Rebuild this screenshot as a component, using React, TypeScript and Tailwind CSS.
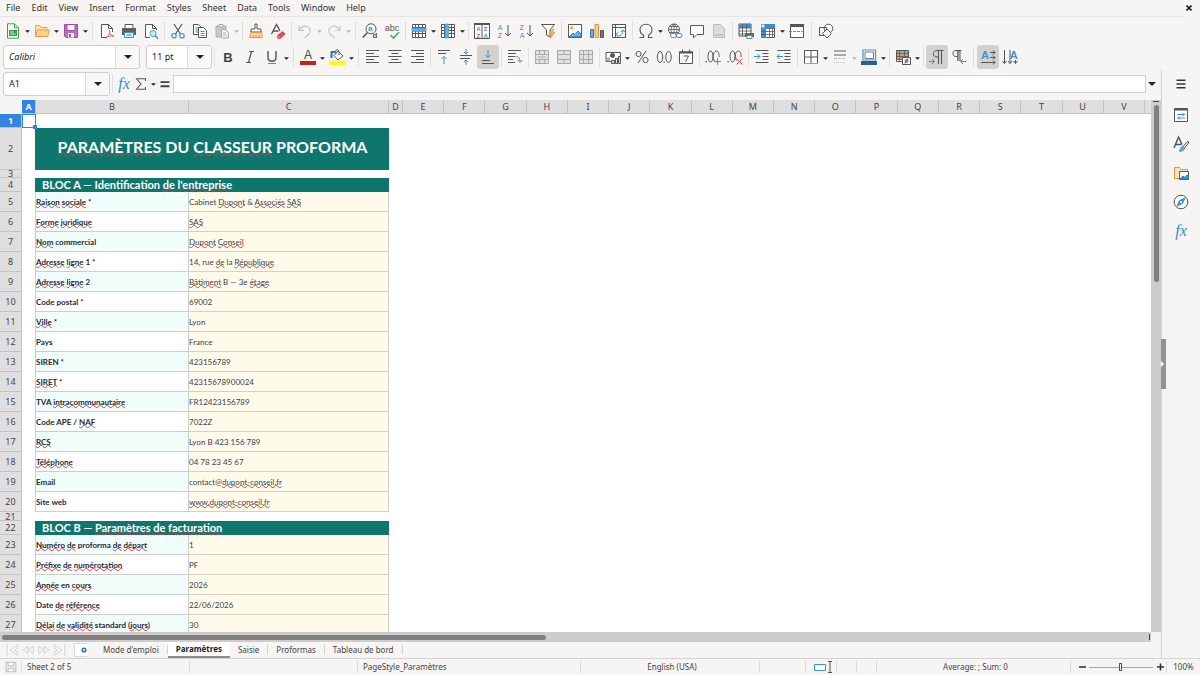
import type { ReactNode } from 'react';

const BLUE = '#3a93d6';
const GRAY = '#555555';

type IconProps = { children: ReactNode; size?: string };

function Svg({ children, size = 'size-4' }: IconProps) {
  return (
    <svg viewBox="0 0 16 16" className={`${size} shrink-0 overflow-visible`} fill="none" stroke={GRAY} strokeWidth="1" aria-hidden="true">
      {children}
    </svg>
  );
}

function Glyph({ x, y, size, color = GRAY, bold, children }: { x: number; y: number; size: number; color?: string; bold?: boolean; children: string }) {
  return (
    <text x={x} y={y} fontSize={size} fill={color} stroke="none" fontWeight={bold ? 700 : 400} textAnchor="middle" fontFamily="Liberation Sans, sans-serif">
      {children}
    </text>
  );
}

const tableLines = 'M1.5 4.5h13M1.5 7.5h13M1.5 10.5h13M4.5 1.5v13M7.5 1.5v13M11.5 1.5v13';

const icons: Record<string, ReactNode> = {
  New: (
    <>
      <path d="M2.500.8h7l4 4v10.400h-11z" fill="#fff" stroke="#3f9a55" />
      <path d="M9.500.8v4h4" stroke="#3f9a55" />
      <path d="M4 7h8v6H4z" fill="#2f9e4f" stroke="none" />
      <path d="M5 9h4M5 11h6" stroke="#c9ecd2" />
    </>
  ),
  Open: (
    <>
      <path d="M1.500 13.500v-11h4l1.500 2h6v3" fill="#fce0b0" stroke="#e8a04a" />
      <path d="M1.500 13.500l2-6.500h12l-2 6.500z" fill="#fbd08c" stroke="#e8a04a" />
    </>
  ),
  Save: (
    <>
      <path d="M1.500 1.500h13v13H3l-1.500-1.500z" fill="#b86fc6" stroke="#9a4fae" />
      <path d="M4 1.500h8v6H4z" fill="#fff" stroke="#9a4fae" />
      <path d="M5 10h6v4.500H5z" fill="#fff" stroke="none" />
      <path d="M6 11h2v3H6z" fill="#9a4fae" stroke="none" />
    </>
  ),
  'Export as PDF': (
    <>
      <path d="M8 14.500H2.500V1.500h7l4 4V9" fill="#fff" />
      <path d="M9.500 1.500v4h4" />
      <path d="M6.500 15c3-2 4.500-5 4.200-7.500-1 0-.5 5 4.300 5.500-3-.6-6 .3-8.500 2z" stroke="#e05c68" />
    </>
  ),
  Print: (
    <>
      <path d="M4 5V1.500h8V5" fill="#fff" />
      <path d="M1 5h14v7H1z" fill="#606060" stroke="none" />
      <path d="M3.500 9.500h9v5h-9z" fill="#dff0fb" stroke={BLUE} />
      <path d="M5.500 12h5" stroke={BLUE} />
    </>
  ),
  'Print Preview': (
    <>
      <path d="M7 14.500H2.500V1.500h7l4 4V7M9.500 1.500v4h4" fill="#fff" />
      <circle cx="10" cy="10.500" r="3" fill="#d8edfb" stroke={BLUE} />
      <path d="M12.200 12.700l3 3" stroke={BLUE} strokeWidth="1.400" />
    </>
  ),
  Cut: (
    <>
      <path d="M4 1l6.500 10M12 1L5.500 11" strokeWidth="1.200" />
      <circle cx="4" cy="12.700" r="2.200" stroke={BLUE} strokeWidth="1.200" />
      <circle cx="12" cy="12.700" r="2.200" stroke={BLUE} strokeWidth="1.200" />
    </>
  ),
  Copy: (
    <>
      <path d="M1.500 11.500v-10h5l3 3v7z" fill="#fff" />
      <path d="M3.500 5h3M3.500 7h4M3.500 9h4" stroke={BLUE} />
      <path d="M6.500 14.500v-10h5l3 3v7z" fill="#fff" />
      <path d="M8.500 8.500h4M8.500 10.500h4M8.500 12.500h4" stroke={BLUE} />
    </>
  ),
  Paste: (
    <>
      <path d="M2 3h10v11H2z" fill="#c8c8c8" stroke="#b0b0b0" />
      <path d="M5 1.500h4v2.500H5z" fill="#eee" stroke="#aaa" />
      <path d="M7.500 6.500h4l3 3v5.500h-7z" fill="#eee" stroke="#aaa" />
      <path d="M9 10h3M9 12h4" stroke="#bbb" />
    </>
  ),
  'Clone Formatting': (
    <>
      <path d="M7 1h2v5h4v3H3V6h4z" fill="#fff" />
      <path d="M3 9.500h10.500l.8 5H1.700z" fill="#fbd9a6" stroke="#e8943a" />
      <path d="M5 12v2.500M8 12v2.500M11 12v2.500" stroke="#e8943a" />
    </>
  ),
  'Clear Formatting': (
    <>
      <path d="M1.500 11L6.500 1.500 10 8M3.500 8h5" strokeWidth="1.300" />
      <path d="M7 13l5.500-4.500L15 11l-5 4.500H8z" fill="#e5484d" stroke="#e5484d" />
      <path d="M7 12.500l2.500 2.500" stroke="#fff" strokeWidth=".7" />
    </>
  ),
  Undo: <path d="M2 2.500v5h5M2.500 7C4 4.500 7 2.500 10 3.500c3.500 1.200 4 5 2 7.500l-4.500 4" stroke="#c0c0c0" strokeWidth="1.200" />,
  Redo: <path d="M14 2.500v5H9M13.500 7C12 4.500 9 2.500 6 3.500c-3.500 1.200-4 5-2 7.500l4.500 4" stroke="#c8c8c8" strokeWidth="1.200" />,
  'Find and Replace': (
    <>
      <circle cx="9" cy="5.800" r="5" fill="#fff" />
      <path d="M5.500 9.500L.8 14.500" strokeWidth="1.600" />
      <Glyph x={8.200} y={8} size={8} color={BLUE} bold>a</Glyph>
      <Glyph x={13} y={14.500} size={8} bold>d</Glyph>
    </>
  ),
  Spelling: (
    <>
      <Glyph x={8} y={8} size={9}>abc</Glyph>
      <path d="M6.500 12l3 3 5.500-6" stroke="#3cb371" strokeWidth="1.600" />
    </>
  ),
  Row: (
    <>
      <path d="M1.500 1.500h13v13h-13z" fill="#fff" />
      <path d={tableLines} />
      <path d="M1 5h14v3.500H1z" fill="#62b0ea" stroke={BLUE} strokeWidth=".6" />
    </>
  ),
  Column: (
    <>
      <path d="M1.500 1.500h13v13h-13z" fill="#fff" />
      <path d={tableLines} />
      <path d="M5 1h3.500v14H5z" fill="#62b0ea" stroke={BLUE} strokeWidth=".6" />
    </>
  ),
  Sort: (
    <>
      <path d="M.5 1.500h15v14H.5zM8 2v13" fill="#fff" />
      <path d="M0 1h16" strokeWidth="2" />
      <Glyph x={4.300} y={8} size={6} color={BLUE} bold>A</Glyph>
      <Glyph x={4.300} y={15} size={6} color="#a94bc0" bold>Z</Glyph>
      <Glyph x={11.700} y={8} size={6} color="#a94bc0" bold>Z</Glyph>
      <Glyph x={11.700} y={15} size={6} color={BLUE} bold>A</Glyph>
    </>
  ),
  'Sort Ascending': (
    <>
      <Glyph x={4} y={6.500} size={7} color={BLUE}>A</Glyph>
      <Glyph x={4} y={14.500} size={7} color="#a94bc0">Z</Glyph>
      <path d="M12 2v11M9 10l3 3 3-3" />
    </>
  ),
  'Sort Descending': (
    <>
      <Glyph x={4} y={6.500} size={7} color="#a94bc0">Z</Glyph>
      <Glyph x={4} y={14.500} size={7} color={BLUE}>A</Glyph>
      <path d="M12 2v11M9 10l3 3 3-3" />
    </>
  ),
  AutoFilter: (
    <>
      <path d="M1.500 1.500h13L10 7v7l-3.500-2V7z" fill="#fff" />
      <path d="M12.500 6L9 11h2.500l-1 4.500 4.500-6h-2.500L14 6z" fill="#f9b55c" stroke="#e8943a" strokeWidth=".6" />
    </>
  ),
  Image: (
    <>
      <path d="M1.500 1.500h13v13h-13z" fill="#fff" />
      <circle cx="4.800" cy="5" r="1.400" fill="#f7b25a" stroke="#e8943a" strokeWidth=".5" />
      <path d="M2 14l4-4 2 1.500L11 8l3 3v3z" fill="#62b0ea" stroke="#2b7fc0" />
    </>
  ),
  Chart: (
    <>
      <path d="M1.500 6.500h3v8h-3z" fill="#62b0ea" stroke="#2b7fc0" />
      <path d="M6 1.500h3.500v13H6z" fill="#fbd08c" stroke="#e8943a" />
      <path d="M11.500 7.500h3v7h-3z" fill="#777" />
    </>
  ),
  'Pivot Table': (
    <>
      <path d="M1.500 1.500h13v13h-13z" fill="#fff" />
      <path d="M1.500 4.500h13M4.500 1.500v13" />
      <path d="M5.500 11.500l1.500 1.500c3 0 5-2 5-5.500M5 11.200l2.500-2M5 11.200l2 2.500M12 7l-2 2M12 7l2 2" stroke={BLUE} />
    </>
  ),
  Symbol: <path d="M1.500 14.500h4v-2.300C3.300 11 2 9 2 6.800 2 3.500 4.600 1.200 8 1.200s6 2.300 6 5.600c0 2.200-1.300 4.200-3.500 5.400v2.300h4" strokeWidth="1.100" />,
  Hyperlink: (
    <>
      <circle cx="7" cy="6.500" r="5.500" fill="#fff" />
      <path d="M1.500 6.500h11M7 1v11M2.500 3.500h9M2.500 9.500h9M7 1C3 5 3 9 7 12M7 1c4 4 4 8 0 11" strokeWidth=".8" />
      <rect x="3.500" y="10.500" width="6" height="4" rx="2" fill="#fff" stroke={BLUE} />
      <rect x="9" y="10.500" width="6" height="4" rx="2" stroke={BLUE} />
    </>
  ),
  Comment: <path d="M1.500 2.500h13v9H8l-3.500 3.500v-3.500h-3z" fill="#fff" />,
  'Headers and Footers': (
    <>
      <path d="M2.500 1.500h7l4 4v9h-11z" fill="#ddd" stroke="#bbb" />
      <path d="M4 11h8v2H4z" fill="#c4c4c4" stroke="none" />
    </>
  ),
  'Print Area': (
    <>
      <path d="M1 1h12v12H1z" fill="#fff" />
      <path d="M1 1h12v4H1z" fill="#3a93d6" stroke="none" />
      <path d="M1 5h12M1 8h12M1 11h12M4.500 1v12M8.500 1v12" strokeWidth=".8" />
      <path d="M7 10h9v4H7z" fill="#666" stroke="none" />
      <path d="M9 12.500h5v3H9z" fill="#fff" stroke={BLUE} />
    </>
  ),
  Freeze: (
    <>
      <path d="M1.500 1.500h13v13h-13z" fill="#fff" />
      <path d="M1 1h5v14H1zM1 1h14v4H1z" fill="#2f8fd8" stroke="none" />
      <path d="M6 5.500h9M6 8.500h9M6 11.500h9M9.500 5v10M12.500 5v10M1 8.500h5M1 11.500h5" strokeWidth=".8" />
      <path d="M1 3h4M3 1v4" stroke="#fff" />
    </>
  ),
  Split: (
    <>
      <path d="M1.500 1.500h13v13h-13z" fill="#fff" />
      <path d="M1 2.500h14" strokeWidth="3" />
      <path d="M0 8.500h16" stroke={BLUE} strokeDasharray="3 1" />
    </>
  ),
  'Draw Functions': (
    <>
      <circle cx="10.500" cy="5.500" r="4.300" fill="#fff" />
      <path d="M1.500 4.500h7v8h-7z" />
      <path d="M9 6l4.500 4.500L9 15l-4.500-4.500z" fill="#f6f5f3" />
    </>
  ),
  Bold: <Glyph x={8} y={12.500} size={13} color="#444" bold>B</Glyph>,
  Italic: <path d="M7 2.500h5M4 13.500h5M9.500 2.500l-3 11" strokeWidth="1.200" />,
  Underline: (
    <>
      <path d="M4 2v6.500c0 5 8 5 8 0V2" strokeWidth="1.400" />
      <path d="M4 14.500h8" stroke={BLUE} />
    </>
  ),
  'Font Color': (
    <>
      <Glyph x={8} y={10} size={12} color="#444">A</Glyph>
      <path d="M0 12h16v4H0z" fill="#c9211e" stroke="none" />
    </>
  ),
  'Background Color': (
    <>
      <path d="M5 6.500L9 2l5 5-5 4z" fill="#fff" />
      <path d="M7 5c-2-6 4-6 3 1" />
      <path d="M2 3h4M2.500 2.500v6.500" stroke="#2474b8" strokeWidth="2" />
      <path d="M0 12h16v4H0z" fill="#ffff00" stroke="none" />
    </>
  ),
  'Align Left': <path d="M1 1.500h13M1 4.500h8M1 7.500h13M1 10.500h8M1 13.500h13" />,
  'Align Center': <path d="M1.500 1.500h13M4.500 4.500h7M1.500 7.500h13M4.500 10.500h7M1.500 13.500h13" />,
  'Align Right': <path d="M2 1.500h13M7 4.500h8M2 7.500h13M7 10.500h8M2 13.500h13" />,
  'Align Top': (
    <>
      <path d="M2 1.500h12M2 4.500h8" />
      <path d="M8 15V7.500M5.500 10L8 7.500l2.500 2.500" stroke={BLUE} />
    </>
  ),
  'Center Vertically': (
    <>
      <path d="M2 6.500h12M2 9.500h10" />
      <path d="M8 0v5M6 3l2 2 2-2M8 16v-5M6 13l2-2 2 2" stroke={BLUE} />
    </>
  ),
  'Align Bottom': (
    <>
      <path d="M2 11.500h8M2 14.500h12" />
      <path d="M8 1v7.500M5.500 6L8 8.500 10.500 6" stroke={BLUE} />
    </>
  ),
  'Wrap Text': (
    <>
      <path d="M1 1.500h13M1 4.500h8M1 7.500h7M1 10.500h5M1 13.500h7" />
      <path d="M8.500 7.500c3 0 4 1 4.500 5M10.500 11l2.500 2.500L15 11" stroke={BLUE} />
    </>
  ),
  'Merge and Center': <path d="M1.500 1.500h13v13h-13zM1.500 5.500h13M1.500 10.500h13M5.500 1.500v4M10.500 1.500v4M5.500 10.500v4M10.500 10.500v4M4 8h8" stroke="#aaa" fill="#e2e2e2" />,
  'Merge Cells': <path d="M1.500 1.500h13v13h-13zM1.500 5.500h13M1.500 10.500h13M8 1.500v4M8 10.500v4" stroke="#aaa" fill="#e2e2e2" />,
  'Unmerge Cells': <path d="M1.500 1.500h13v13h-13zM1.500 5.500h13M1.500 10.500h13M5.500 1.500v13M10.500 1.500v13" stroke="#aaa" fill="#e2e2e2" />,
  Currency: (
    <>
      <path d="M1 3.500h14.500v9H1z" fill="#fff" />
      <circle cx="7.500" cy="6.500" r="2" fill="#555" />
      <path d="M2 8.500h3v4H2z" stroke="none" fill="#aaa" />
      <path d="M6.500 11.500h3v3h-3zM10.500 9.500h2v5h-2zM13.500 7.500h2v7h-2z" fill="#ddd" />
    </>
  ),
  Percent: (
    <>
      <circle cx="4.500" cy="5" r="2.600" />
      <circle cx="11.500" cy="11" r="2.600" />
      <path d="M12 2L4 14" />
    </>
  ),
  Number: (
    <>
      <ellipse cx="4" cy="8" rx="2.700" ry="5.500" />
      <ellipse cx="12.500" cy="8" rx="2.700" ry="5.500" />
      <path d="M7.500 12.500h1.200v1.500H7.500z" fill={GRAY} stroke="none" />
    </>
  ),
  Date: (
    <>
      <path d="M1.500 3h13v11.500h-13z" fill="#fff" />
      <path d="M1 3.500h14" strokeWidth="2" />
      <path d="M4.500.5v3M11.500.5v3M5.500 7h5l-3 6" />
    </>
  ),
  'Add Decimal Place': (
    <>
      <path d="M.5 12h1.200v1.500H.5z" fill={GRAY} stroke="none" />
      <ellipse cx="5.500" cy="7.500" rx="2.500" ry="5.500" />
      <path d="M10.500 12.800c-3.500-1-3-10.800.8-10.800 2 0 3 2.500 2.800 6" />
      <path d="M9 12.500h7M12.500 9v7" stroke={BLUE} />
    </>
  ),
  'Delete Decimal Place': (
    <>
      <path d="M.5 12h1.200v1.500H.5z" fill={GRAY} stroke="none" />
      <ellipse cx="5.500" cy="7.500" rx="2.500" ry="5.500" />
      <path d="M9.500 11.500c-2-3-1.500-9.500 1.800-9.500 2 0 3 2.500 2.800 6" />
      <path d="M9.500 9.500l6 6M15.500 9.500l-6 6" stroke="#e5484d" />
    </>
  ),
  'Increase Indent': (
    <>
      <path d="M1.500 1.500h13M8.500 4.500h6M8.500 7.500h6M8.500 10.500h6M1.500 13.500h13" />
      <path d="M0 7.500h6M3.500 5L6 7.500 3.500 10" stroke={BLUE} />
    </>
  ),
  'Decrease Indent': (
    <>
      <path d="M1.500 1.500h13M8.500 4.500h6M8.500 7.500h6M8.500 10.500h6M1.500 13.500h13" />
      <path d="M7 7.500H1M3.500 5L1 7.500 3.500 10" stroke={BLUE} />
    </>
  ),
  Borders: (
    <>
      <path d="M1.500 1.500h13v13h-13zM1.500 8h13M8 1.500v13" fill="#fff" />
      <path d="M1 14.500h14" stroke="#e8943a" />
    </>
  ),
  'Border Style': (
    <>
      <path d="M2 2h12M2 6h12" stroke="#aaa" strokeWidth="2" />
      <path d="M2 9.500h12" stroke="#bbb" strokeDasharray="3 1" />
      <path d="M2 13.500h12" stroke="#bbb" strokeDasharray="1 1" />
    </>
  ),
  'Border Color': (
    <>
      <path d="M2 1h12.500v10H2z" fill="#fff" stroke={BLUE} strokeWidth="1.200" />
      <path d="M4 3h8.500v6.500H4z" fill="#fff" stroke="#777" />
      <path d="M0 12h16v4H0z" fill="#2a6099" stroke="none" />
    </>
  ),
  'Conditional Formatting': (
    <>
      <path d="M1.500 1.500h12v11h-12z" fill="#fff" />
      <path d="M2 2h11v2.500H2z" fill="#67c587" stroke="none" />
      <path d="M2 5h11v6H2z" fill="#f08c84" stroke="none" />
      <path d="M1.500 4.500h12M1.500 7.500h12M1.500 10.500h12M4.500 1.500v11M9.500 1.500v6" strokeWidth=".8" />
      <path d="M7.500 8.500h8v7h-8z" fill="#fff" />
      <path d="M9.500 11h4M9.500 13h4M13 9.500l-3 5" />
    </>
  ),
  'Left-To-Right': (
    <>
      <path d="M9.500 15V1.500M12.500 15V1.500M14.500 1.500H8C3 1.500 3 8 8 8h1.500" />
      <path d="M0 12.500h5.500M3 10l2.500 2.500L3 15" stroke={BLUE} />
    </>
  ),
  'Right-To-Left': (
    <>
      <path d="M6.500 12V1.500M9 12V1.500M10.500 1.500H5C1 1.500 1 7.500 5 7.500h1.500" />
      <path d="M6.500 2H9v10H6.500z" fill="#999" stroke="none" />
      <path d="M15.500 12.500H9.500M12 10l-2.500 2.500L12 15" stroke={BLUE} />
    </>
  ),
  'Text Direction Left to Right': (
    <>
      <Glyph x={5} y={10} size={11} color={BLUE} bold>A</Glyph>
      <path d="M10 3.500h5M13 1.500l2 2-2 2M10 8.500h5M13 6.500l2 2-2 2M1 13.500h14M13 11.500l2 2-2 2" />
    </>
  ),
  'Text Direction Top to Bottom': (
    <>
      <path d="M2.500 1v13.500M.5 12l2 2.500 2-2.500M8 1v13.500M6 12l2 2.500 2-2.500M13.500 11v3.500M11.500 12l2 2.500 2-2.500" />
      <Glyph x={11.800} y={10} size={11} color={BLUE} bold>A</Glyph>
    </>
  ),
};

// trailing "+" adds a drop-down arrow, "|" and "||" are narrow and wide separators
const standardBar = [
  'New+', 'Open+', 'Save+', '||',
  'Export as PDF', 'Print', 'Print Preview', '|',
  'Cut', 'Copy', 'Paste+', '|',
  'Clone Formatting', 'Clear Formatting', '|',
  'Undo+', 'Redo+', '||',
  'Find and Replace', 'Spelling', '|',
  'Row+', 'Column+', '|',
  'Sort', 'Sort Ascending', 'Sort Descending', 'AutoFilter', '|',
  'Image', 'Chart', 'Pivot Table', '|',
  'Symbol+', 'Hyperlink', 'Comment', 'Headers and Footers', '|',
  'Print Area', 'Freeze+', 'Split', '||',
  'Draw Functions',
];

const formattingBar = [
  '|', 'Bold', 'Italic', 'Underline+', '||',
  'Font Color+', 'Background Color+', '||',
  'Align Left', 'Align Center', 'Align Right', '|',
  'Align Top', 'Center Vertically', 'Align Bottom', '|',
  'Wrap Text', '|',
  'Merge and Center', 'Merge Cells', 'Unmerge Cells', '|',
  'Currency+', 'Percent', 'Number', 'Date', '|',
  'Add Decimal Place', 'Delete Decimal Place', '|',
  'Increase Indent', 'Decrease Indent', '|',
  'Borders+', 'Border Style+', 'Border Color+', '|',
  'Conditional Formatting+', '|',
  'Left-To-Right', 'Right-To-Left', '||',
  'Text Direction Left to Right', 'Text Direction Top to Bottom',
];

const pressed = ['Align Bottom', 'Left-To-Right', 'Text Direction Left to Right'];
const disabled = ['Paste', 'Undo', 'Redo', 'Border Style', 'Headers and Footers', 'Merge and Center', 'Merge Cells', 'Unmerge Cells'];

function Caret({ muted, large }: { muted?: boolean; large?: boolean }) {
  return (
    <svg viewBox="0 0 8 4" className={large ? 'h-1 w-2' : 'h-[3px] w-[5px]'} aria-hidden="true">
      <path d="M0 0h8L4 4z" fill={muted ? '#b5b5b5' : '#222'} />
    </svg>
  );
}

function Tools({ items }: { items: string[] }) {
  return (
    <>
      {items.map((item, i) => {
        if (item === '|' || item === '||') {
          return (
            <div key={i} className={`flex shrink-0 justify-center ${item === '|' ? 'w-[5px]' : 'w-[7px]'}`}>
              <div className="h-5 w-px bg-[#e2e1df]" />
            </div>
          );
        }
        const name = item.replace('+', '');
        const off = disabled.includes(name);
        const on = pressed.includes(name);
        return (
          <div key={i} className="flex shrink-0 items-center">
            <button
              type="button"
              aria-label={name}
              disabled={off}
              className={`flex h-6 w-[22px] items-center justify-center rounded-[3px] ${on ? 'bg-[#d3d1ce]' : ''}`}
            >
              <Svg>{icons[name]}</Svg>
            </button>
            {item.endsWith('+') && (
              <button type="button" aria-label={`${name} options`} disabled={off} className="flex h-6 w-[7px] items-center justify-center pt-0.5">
                <Caret muted={off} />
              </button>
            )}
          </div>
        );
      })}
    </>
  );
}

function Combo({ label, value, width, italic }: { label: string; value: string; width: string; italic?: boolean }) {
  return (
    <div className={`flex h-6 shrink-0 overflow-hidden rounded-[3px] border border-[#cfcdca] bg-white ${width}`}>
      <input
        aria-label={label}
        defaultValue={value}
        className={`min-w-0 flex-1 px-[5px] text-[9px] text-[#222] outline-none ${italic ? 'italic' : ''}`}
      />
      <button type="button" aria-label={`${label} list`} className="flex w-6 items-center justify-center border-l border-[#dddbd8] bg-[#f9f8f7]">
        <Caret large />
      </button>
    </div>
  );
}

// [row number, label, value]; text between underscores is flagged by the spell checker
const blocA: [number, string, string][] = [
  [5, '_Raison_ _sociale_ *', 'Cabinet _Dupont_ & _Associés_ _SAS_'],
  [6, '_Forme_ _juridique_', '_SAS_'],
  [7, '_Nom_ commercial', '_Dupont_ _Conseil_'],
  [8, '_Adresse_ _ligne_ 1 *', '14, rue _de_ la _République_'],
  [9, '_Adresse_ _ligne_ 2', '_Bâtiment_ B — 3e _étage_'],
  [10, 'Code postal *', '69002'],
  [11, '_Ville_ *', 'Lyon'],
  [12, 'Pays', 'France'],
  [13, 'SIREN *', '423156789'],
  [14, '_SIRET_ *', '42315678900024'],
  [15, 'TVA _intracommunautaire_', 'FR12423156789'],
  [16, 'Code APE / _NAF_', '7022Z'],
  [17, '_RCS_', 'Lyon B 423 156 789'],
  [18, '_Téléphone_', '04 78 23 45 67'],
  [19, 'Email', 'contact@_dupont-conseil.fr_'],
  [20, 'Site web', '_www.dupont-conseil.fr_'],
];

const blocB: [number, string, string][] = [
  [23, '_Numéro_ _de_ proforma _de_ _départ_', '1'],
  [24, '_Préfixe_ _de_ _numérotation_', 'PF'],
  [25, '_Année_ en _cours_', '2026'],
  [26, 'Date _de_ _référence_', '22/06/2026'],
  [27, '_Délai_ _de_ _validité_ standard (_jours_)', '30'],
];

function Spell({ text }: { text: string }) {
  return (
    <>
      {text.split('_').map((part, i) =>
        i % 2 ? (
          <span key={i} className="underline decoration-[#e0393e] decoration-wavy decoration-1 -underline-offset-1 [text-decoration-skip-ink:none]">
            {part}
          </span>
        ) : (
          part
        ),
      )}
    </>
  );
}

function RowHeader({ n, height, selected }: { n: number; height: string; selected?: boolean }) {
  return (
    <th
      scope="row"
      className={`overflow-hidden border-r border-b border-[#c3c3c3] p-0 text-center text-[9px] leading-[7px] ${height} ${
        selected ? 'bg-[#3584e4] font-bold text-white' : 'bg-[#dfdfdf] font-normal text-[#444]'
      }`}
    >
      {n}
    </th>
  );
}

function DataRow({ row }: { row: [number, string, string] }) {
  const [n, label, value] = row;
  // odd rows from 5 on are tinted, bloc B follows the same parity
  return (
    <tr>
      <RowHeader n={n} height="h-5" />
      <td className="border-r border-[#c9cfcd] p-0" />
      <td className={`truncate border-r border-b border-[#c9cfcd] p-0 font-[Lato] text-[8px] leading-3 font-bold text-[#1f2937] ${n % 2 ? 'bg-[#f0fdfa]' : 'bg-white'}`}>
        <Spell text={label} />
      </td>
      <td className="truncate border-r border-b border-[#d3d0c4] bg-[#fffbeb] p-0 font-[Lato] text-[8px] leading-3 text-[#374151]">
        <Spell text={value} />
      </td>
      <td colSpan={20} />
    </tr>
  );
}

function GapRow({ n, height }: { n: number; height: string }) {
  return (
    <tr>
      <RowHeader n={n} height={height} />
      <td colSpan={23} className="p-0" />
    </tr>
  );
}

function BlocTitle({ n, text }: { n: number; text: string }) {
  return (
    <tr>
      <RowHeader n={n} height="h-[14px]" />
      <td className="border-r border-[#0f766e] p-0" />
      <td colSpan={2} className="bg-[#0f766e] p-0 pl-1.5 font-[Lato] text-[11px] leading-[14px] font-bold text-white">
        <Spell text={text} />
      </td>
      <td colSpan={20} />
    </tr>
  );
}

function Sheet() {
  const columns = 'ABCDEFGHIJKLMNOPQRSTUV'.split('');
  return (
    <table className="w-full table-fixed border-separate border-spacing-0">
      <colgroup>
        <col className="w-[22px]" />
        <col className="w-[14px]" />
        <col className="w-[153px]" />
        <col className="w-[200px]" />
        <col className="w-[14px]" />
        {columns.slice(4).map((c) => (
          <col key={c} />
        ))}
        <col className="w-[6px]" />
      </colgroup>
      <thead>
        <tr>
          <td className="h-[14px] bg-[#f6f5f3] p-0" />
          {columns.map((c) => (
            <th
              key={c}
              scope="col"
              className={`border-r border-b border-[#c3c3c3] p-0 text-center text-[9px] leading-[13px] ${
                c === 'A' ? 'bg-[#3584e4] font-bold text-white' : 'bg-[#dfdfdf] font-normal text-[#444]'
              }`}
            >
              {c}
            </th>
          ))}
          <td className="border-b border-[#c3c3c3] bg-[#dfdfdf] p-0" />
        </tr>
      </thead>
      <tbody>
        <tr>
          <RowHeader n={1} height="h-[14px]" selected />
          <td className="relative border border-[#3584e4] p-0">
            <span className="absolute -right-0.5 -bottom-0.5 z-10 size-1 bg-[#3584e4]" />
          </td>
          <td colSpan={22} />
        </tr>
        <tr>
          <RowHeader n={2} height="h-[42px]" />
          <td className="border-r border-[#0f766e] p-0" />
          <td colSpan={2} className="bg-[#0f766e] p-0 pb-1 text-center font-[Lato] text-base leading-6 font-bold text-white">
            <Spell text="_PARAMÈTRES_ DU _CLASSEUR_ PROFORMA" />
          </td>
          <td colSpan={20} />
        </tr>
        <GapRow n={3} height="h-2" />
        <BlocTitle n={4} text="BLOC A — Identification _de_ _l'entreprise_" />
        {blocA.map((row) => (
          <DataRow key={row[0]} row={row} />
        ))}
        <GapRow n={21} height="h-[9px]" />
        <BlocTitle n={22} text="BLOC B — _Paramètres_ _de_ _facturation_" />
        {blocB.map((row) => (
          <DataRow key={row[0]} row={row} />
        ))}
      </tbody>
    </table>
  );
}

function FunctionIcon() {
  return <span className="font-['Liberation_Serif'] text-base leading-4 text-[#2f8fd8] italic">fx</span>;
}

function FormulaBar() {
  return (
    <div className="flex h-[30px] shrink-0 items-start pt-0.5 pl-[3px]">
      <Combo label="Name Box" value="A1" width="w-[107px]" />
      <div className="mx-0.5 mt-0.5 h-5 w-px bg-[#e2e1df]" />
      <button type="button" aria-label="Function Wizard" className="flex h-6 w-[18px] items-center justify-center">
        <FunctionIcon />
      </button>
      <button type="button" aria-label="Select Function" className="flex h-6 w-6 items-center justify-center gap-1">
        <Svg size="size-3">
          <path d="M14 4V1H2l6 7-6 7h12v-3" strokeWidth="1.400" />
        </Svg>
        <Caret />
      </button>
      <button type="button" aria-label="Formula" className="flex h-6 w-4 items-center justify-center">
        <Svg size="size-3">
          <path d="M2 5.500h12M2 11h12" strokeWidth="2.400" stroke="#444" />
        </Svg>
      </button>
      <input aria-label="Input line" className="mt-[3px] h-[18px] min-w-0 flex-1 border border-[#d5d3d0] bg-white px-1 text-[9px] outline-none" />
      <button type="button" aria-label="Expand formula bar" className="flex h-6 w-[15px] items-center justify-center pr-1">
        <Caret large />
      </button>
    </div>
  );
}

const deck: [string, ReactNode][] = [
  ['Properties', (
    <>
      <path d="M1.500 1.500h13v13h-13z" fill="#fff" />
      <path d="M1 2.500h14" strokeWidth="2" />
      <path d="M4 7.500h8M4 11h8M10 6v3M6 9.500v3" stroke={BLUE} />
    </>
  )],
  ['Styles', (
    <>
      <path d="M1 12L5.500 1 9 8.500M2.500 8.500h6" strokeWidth="1.500" />
      <path d="M15 5l-5 5.500 1.500 1.500L15.500 7z" fill="#fff" />
      <path d="M10 10.500c-2.500 0-2 3-4 4.500 3 .5 5.500-.5 5.500-3z" fill="#62b0ea" stroke={BLUE} />
    </>
  )],
  ['Gallery', (
    <>
      <path d="M1.500 13.500v-11h5l1.500 2h6.500v9z" fill="#fde3c0" stroke="#e8943a" />
      <path d="M6.500 6.500h9v8h-9z" fill="#fff" />
      <path d="M7 14l3-3 2 1.500 2-2.500 1.500 1.500V14z" fill="#3a93d6" stroke="#2b7fc0" />
    </>
  )],
  ['Navigator', (
    <>
      <circle cx="8" cy="8" r="6.800" fill="#fff" />
      <path d="M12 4l-2.500 5.500L4 12l2.500-5.500z" fill="#3a93d6" stroke={BLUE} />
      <circle cx="8" cy="8" r="1" fill="#fff" stroke="none" />
    </>
  )],
];

function Sidebar() {
  return (
    <aside className="relative flex w-[39px] shrink-0 flex-col items-center border-l border-[#d5d3d0]">
      <button type="button" aria-label="Sidebar settings" className="mt-1 flex h-5 w-6 items-center justify-center">
        <Svg size="size-3">
          <path d="M2 3h12M2 8h12M2 13h12" strokeWidth="2" stroke="#333" />
        </Svg>
      </button>
      <div className="mt-[9px] flex flex-col gap-[5px]">
        {deck.map(([name, art]) => (
          <button key={name} type="button" aria-label={name} className="flex size-6 items-center justify-center">
            <Svg>{art}</Svg>
          </button>
        ))}
        <button type="button" aria-label="Functions" className="flex size-6 items-center justify-center">
          <FunctionIcon />
        </button>
      </div>
      <button type="button" aria-label="Hide sidebar" className="absolute top-1/2 -left-px flex h-[50px] w-[5px] -translate-y-1/2 items-center bg-[#939393]">
        <svg viewBox="0 0 3 6" className="h-1.5 w-[3px]" aria-hidden="true">
          <path d="M0 0l3 3-3 3z" fill="#fff" />
        </svg>
      </button>
    </aside>
  );
}

const tabs = ["Mode d'emploi", 'Paramètres', 'Saisie', 'Proformas', 'Tableau de bord'];

const scrollButtons: [string, string][] = [
  ['First sheet', 'M2.500 1v14M14 2L6 8l8 6v-4l-3-2 3-2z'],
  ['Previous sheet', 'M8 4L2 8l6 4zM14 4L8 8l6 4z'],
  ['Next sheet', 'M2 4l6 4-6 4zM8 4l6 4-6 4z'],
  ['Last sheet', 'M13.500 1v14M2 2l8 6-8 6v-4l3-2-3-2z'],
];

function SheetTabs() {
  return (
    <div className="flex h-4 shrink-0 items-start pl-1 text-[8px] text-[#444]">
      {scrollButtons.map(([name, d]) => (
        <button key={name} type="button" disabled aria-label={name} className="flex size-4 items-center justify-center">
          <svg viewBox="0 0 16 16" className="size-3.5" fill="none" stroke="#d2d0cd" aria-hidden="true">
            <path d={d} />
          </svg>
        </button>
      ))}
      <button type="button" aria-label="Add sheet" className="mt-px ml-1.5 flex h-3.5 w-[13px] items-center justify-end border-y border-l border-[#dddbd8] bg-white">
        <svg viewBox="0 0 6 6" className="size-1.5" aria-hidden="true">
          <circle cx="3" cy="3" r="1.800" fill="none" stroke="#2a6ebb" strokeWidth="1.500" />
        </svg>
      </button>
      <div role="tablist" className="ml-2 flex items-center">
        {tabs.map((tab) => {
          const active = tab === 'Paramètres';
          return (
            <button
              key={tab}
              type="button"
              role="tab"
              aria-selected={active}
              className={`flex h-4 items-center ${active ? 'border-b-2 border-[#8c8c8c] bg-white px-2 font-bold text-[#222]' : 'pb-0.5'}`}
            >
              {active ? tab : <span className="border-r border-[#d5d3d0] px-2 leading-[9px]">{tab}</span>}
            </button>
          );
        })}
      </div>
    </div>
  );
}

function StatusBar() {
  const cell = 'flex h-3 items-center border-r border-[#dddbd8]';
  return (
    <footer className="flex h-[17px] shrink-0 items-center border-t border-[#d5d3d0] text-[8px] text-[#444]">
      <button type="button" aria-label="Document modified" className="flex w-[22px] justify-center border-r border-[#e2e1df]">
        <svg viewBox="0 0 16 16" className="size-3" fill="none" stroke="#aaa" aria-hidden="true">
          <path d="M1.500 1.500h13v13h-13zM4 1.500v5h8v-5M4 14.500v-5h8v5" />
        </svg>
      </button>
      <div className={`${cell} w-[168px] pl-[5px]`}>Sheet 2 of 5</div>
      <div className={`${cell} w-[168px]`} />
      <div className={`${cell} flex-1 pl-[5px]`}>PageStyle_Paramètres</div>
      <div className={`${cell} w-[179px] justify-center pl-1`}>English (USA)</div>
      <div className={`${cell} w-[46px]`} />
      <div className={`${cell} w-[31px] justify-center pl-1`}>
        <svg viewBox="0 0 20 12" className="h-3 w-5" fill="none" aria-hidden="true">
          <path d="M1.500 3.500h11v6h-11z" fill="#fff" stroke="#3a93d6" />
          <path d="M15 .5h4M17 .5v11M15 11.500h4" stroke="#555" />
        </svg>
      </div>
      <div className={`${cell} w-5`} />
      <div className={`${cell} w-5`} />
      <div className={`${cell} w-[194px] justify-center pl-1`}>Average: ; Sum: 0</div>
      <div className={`${cell} w-[96px] justify-center gap-[3px] pl-1`}>
        <button type="button" aria-label="Zoom out" className="flex h-3 w-2 items-center justify-center">
          <svg viewBox="0 0 8 8" className="size-2" aria-hidden="true"><path d="M1 4h7" stroke="#333" strokeWidth="1.600" /></svg>
        </button>
        <input
          type="range"
          aria-label="Zoom"
          defaultValue={50}
          className="h-2 w-16 appearance-none bg-[linear-gradient(#a5a5a5,#a5a5a5)] bg-[length:100%_1px] bg-center bg-no-repeat [&::-webkit-slider-thumb]:h-2 [&::-webkit-slider-thumb]:w-[3px] [&::-webkit-slider-thumb]:appearance-none [&::-webkit-slider-thumb]:border [&::-webkit-slider-thumb]:border-[#555] [&::-webkit-slider-thumb]:bg-[#eee]"
        />
        <button type="button" aria-label="Zoom in" className="flex h-3 w-2 items-center justify-center">
          <svg viewBox="0 0 8 8" className="size-2" aria-hidden="true"><path d="M1 4h7M4.500.5v7" stroke="#333" strokeWidth="1.600" /></svg>
        </button>
      </div>
      <div className="w-[33px] text-center">100%</div>
    </footer>
  );
}

export default function App() {
  return (
    <div className="flex h-screen flex-col overflow-hidden bg-[#f6f5f3] font-['Noto_Sans',sans-serif] text-[#333]">
      <nav className="mr-4 flex h-[17px] shrink-0 items-center gap-px border-b border-[#e6e5e3] pl-px text-[9px]">
        {['File', 'Edit', 'View', 'Insert', 'Format', 'Styles', 'Sheet', 'Data', 'Tools', 'Window', 'Help'].map((m) => (
          <button key={m} type="button" className="px-[5px]">
            {m}
          </button>
        ))}
        <button type="button" aria-label="Close document" className="-mr-3 ml-auto flex size-3.5 items-center justify-center">
          <svg viewBox="0 0 6 6" className="size-1.5" aria-hidden="true">
            <path d="M.5.5l5 5M5.500.5l-5 5" stroke="#222" strokeWidth="1.600" />
          </svg>
        </button>
      </nav>
      <div role="toolbar" aria-label="Standard" className="flex h-[27px] shrink-0 items-center pl-0.5">
        <Tools items={standardBar} />
      </div>
      <div role="toolbar" aria-label="Formatting" className="flex h-[26px] shrink-0 items-center pl-[3px]">
        <Combo label="Font Name" value="Calibri" width="w-[137px] mr-1.5" italic />
        <Combo label="Font Size" value="11 pt" width="w-[66px]" />
        <Tools items={formattingBar} />
      </div>
      <div className="flex min-h-0 flex-1">
        <main className="flex min-w-0 flex-1 flex-col">
          <FormulaBar />
          <div className="flex min-h-0 flex-1">
            <div className="min-w-0 flex-1 overflow-hidden bg-white">
              <Sheet />
            </div>
            <div className="flex w-2.5 flex-col items-center bg-[#cdcdcd]">
              <div className="mt-px h-px w-1.5 bg-[#444]" />
              <div className="mt-[3px] h-1/3 w-[5px] rounded-full bg-[#808080]" />
            </div>
          </div>
          <div className="mr-2.5 flex h-2.5 shrink-0 items-center justify-between bg-[#cdcdcd] pl-0.5">
            <div className="h-[5px] w-[544px] rounded-full bg-[#808080]" />
            <div className="mr-px h-1.5 w-px bg-[#444]" />
          </div>
          <SheetTabs />
        </main>
        <Sidebar />
      </div>
      <StatusBar />
    </div>
  );
}
